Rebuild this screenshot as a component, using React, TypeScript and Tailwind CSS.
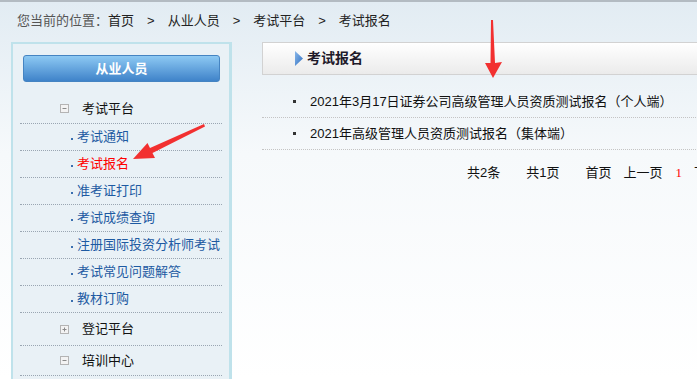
import React from 'react';

const font = { fontFamily: '"Liberation Sans", "Noto Sans CJK SC", sans-serif' };

const subItems = ['考试通知', '考试报名', '准考证打印', '考试成绩查询', '注册国际投资分析师考试', '考试常见问题解答', '教材订购'];

function ToggleIcon({ open }: { open: boolean }) {
  return (
    <svg width="9" height="9" viewBox="0 0 9 9" className="shrink-0">
      <rect x="0.5" y="0.5" width="8" height="8" fill="#f3f3f3" stroke="#b4b4b4" />
      <line x1="2.5" y1="4.5" x2="6.5" y2="4.5" stroke="#8a8a8a" />
      {!open && <line x1="4.5" y1="2.5" x2="4.5" y2="6.5" stroke="#8a8a8a" />}
    </svg>
  );
}

function GroupRow({ label, open, h }: { label: string; open: boolean; h: string }) {
  return (
    <div className={`flex items-center pl-[40px] gap-[13px] border-b border-dotted border-[#9aa6b2] text-[13px] text-[#111] ${h}`}>
      <ToggleIcon open={open} />
      <span>{label}</span>
    </div>
  );
}

export default function App() {
  return (
    <div
      className="relative w-[697px] h-[379px] overflow-hidden border-t-2 border-[#b3bbc2] bg-gradient-to-b from-[#e2ecf3] via-[#f6f9fb] via-40% to-white"
      style={font}
    >
      {/* 面包屑 */}
      <div className="h-[38px] pl-[17px] flex items-center text-[13px] text-[#222]">
        <span className="text-[#555]">您当前的位置：</span>
        <span>首页</span>
        <span className="px-[13px]">&gt;</span>
        <span>从业人员</span>
        <span className="px-[13px]">&gt;</span>
        <span>考试平台</span>
        <span className="px-[13px]">&gt;</span>
        <span>考试报名</span>
      </div>

      <div className="flex pl-[11px] pt-[2px]">
        {/* 左侧菜单 */}
        <div className="w-[221px] h-[360px] shrink-0 border-l-2 border-t-2 border-r-[3px] border-[#bfe2eb] bg-[#e9f1f6]">
          <div className="mt-[11px] ml-[10px] w-[197px] h-[27px] rounded-[3px] border border-[#4584c2] bg-gradient-to-b from-[#8dc9f3] to-[#3f83c9] flex items-center justify-center text-[13px] font-bold text-white">
            从业人员
          </div>
          <div className="px-[7px] mt-[12px]">
            <GroupRow label="考试平台" open h="h-[30px]" />
            {subItems.map((item) => (
              <div
                key={item}
                className="h-[27px] flex items-center pl-[51px] border-b border-dotted border-[#9aa6b2] text-[13px]"
              >
                <span className="w-[2px] h-[2px] bg-[#3a6fb0] mr-[4px] mt-[3px]" />
                <span className={item === '考试报名' ? 'text-[#ff0000]' : 'text-[#1d5aa2]'}>{item}</span>
              </div>
            ))}
            <GroupRow label="登记平台" open={false} h="h-[33px]" />
            <GroupRow label="培训中心" open h="h-[30px]" />
          </div>
        </div>

        {/* 右侧内容 */}
        <div className="ml-[30px] w-[470px] shrink-0">
          <div className="h-[33px] border border-[#d2d2d2] bg-gradient-to-b from-white to-[#ebebeb] flex items-center pl-[32px]">
            <svg width="8" height="15" viewBox="0 0 8 15" className="mr-[4px]">
              <defs>
                <linearGradient id="tri" x1="0" y1="0" x2="1" y2="1">
                  <stop offset="0" stopColor="#8ab8ea" />
                  <stop offset="1" stopColor="#2f6fc0" />
                </linearGradient>
              </defs>
              <polygon points="0,0 8,7.5 0,15" fill="url(#tri)" />
            </svg>
            <span className="text-[14px] font-bold text-[#1e1a2a]">考试报名</span>
          </div>

          <div className="mt-[11px]">
            {['2021年3月17日证券公司高级管理人员资质测试报名（个人端）', '2021年高级管理人员资质测试报名（集体端）'].map((t) => (
              <div key={t} className="h-[32px] flex items-center border-b border-dotted border-[#c4c4c4] text-[13px] text-[#111]">
                <span className="ml-[31px] w-[3px] h-[3px] bg-[#333]" />
                <span className="ml-[14px]">{t}</span>
              </div>
            ))}
          </div>

          <div className="mt-[10px] h-[26px] flex items-center pl-[205px] text-[13px] text-[#111] whitespace-nowrap">
            <span>共2条</span>
            <span className="ml-[26px]">共1页</span>
            <span className="ml-[26px]">首页</span>
            <span className="ml-[12px]">上一页</span>
            <span className="ml-[13px] text-[#ff0000]" style={{ fontFamily: '"Liberation Serif", serif' }}>1</span>
            <span className="ml-[12px]">下一页</span>
          </div>
        </div>
      </div>

      {/* 红色箭头标注 */}
      <svg className="absolute left-0 top-0 pointer-events-none" width="697" height="379">
        <polygon points="491,18 493,18 495,61 502,60 493,76 485,61 490.5,61" fill="#f23030" />
        <polygon points="204,122 205,124.5 152.5,151 155,156 133,157 147.5,141 150,146" fill="#f23030" />
      </svg>
    </div>
  );
}
